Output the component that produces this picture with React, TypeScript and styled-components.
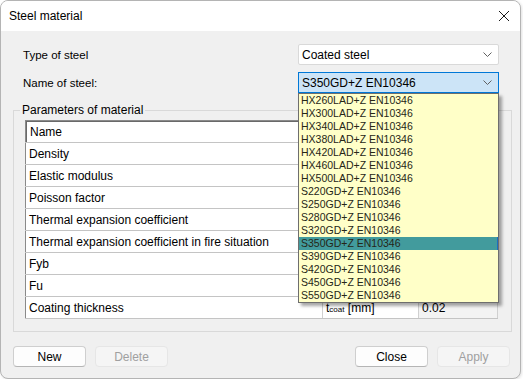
import React from 'react';
import styled, { createGlobalStyle } from 'styled-components';

const GlobalStyle = createGlobalStyle`
  html, body {
    margin: 0;
    padding: 0;
    background: #ffffff;
  }
  body {
    font-family: 'Liberation Sans', Arial, sans-serif;
    font-size: 12px;
    color: #000;
  }
`;

const steelNames = [
  'HX260LAD+Z EN10346',
  'HX300LAD+Z EN10346',
  'HX340LAD+Z EN10346',
  'HX380LAD+Z EN10346',
  'HX420LAD+Z EN10346',
  'HX460LAD+Z EN10346',
  'HX500LAD+Z EN10346',
  'S220GD+Z EN10346',
  'S250GD+Z EN10346',
  'S280GD+Z EN10346',
  'S320GD+Z EN10346',
  'S350GD+Z EN10346',
  'S390GD+Z EN10346',
  'S420GD+Z EN10346',
  'S450GD+Z EN10346',
  'S550GD+Z EN10346',
];

// name, symbol, subscript, unit, value
const params: [string, string, string, string, string][] = [
  ['Density', 'ρ', '', '[kg/m³]', '7850'],
  ['Elastic modulus', 'E', '', '[MPa]', '210000'],
  ['Poisson factor', 'ν', '', '[-]', '0.3'],
  ['Thermal expansion coefficient', 'α', '', '[1/K]', '1.2E-05'],
  ['Thermal expansion coefficient in fire situation', 'α', 'fi', '[1/K]', '1.4E-05'],
  ['Fyb', 'f', 'yb', '[MPa]', '350'],
  ['Fu', 'f', 'u', '[MPa]', '420'],
  ['Coating thickness', 't', 'coat', '[mm]', '0.02'],
];

const Window = styled.div`
  width: 519px;
  height: 377px;
  border: 1px solid #b4b4b4;
  border-radius: 8px;
  overflow: hidden;
  display: flex;
  flex-direction: column;
  background: #f0f0f0;
  box-shadow: 1px 1px 3px rgba(0, 0, 0, 0.12);
`;

const TitleBar = styled.div`
  height: 30px;
  background: #ffffff;
  display: flex;
  align-items: center;
  justify-content: space-between;
  padding: 0 9px 0 8px;
  font-size: 12px;
  color: #000;
`;

const CloseIcon = styled.svg`
  width: 12px;
  height: 12px;
  margin-right: 1px;
`;

const Body = styled.div`
  flex: 1;
  display: flex;
  flex-direction: column;
  padding: 13px 8px 10px 12px;
`;

const FormRow = styled.div`
  display: grid;
  grid-template-columns: 1fr 201px;
  align-items: center;
  padding: 0 13px 0 10px;
  margin-bottom: 7px;
`;

const Label = styled.span`
  font-size: 11.5px;
  color: #000;
`;

const ComboWrap = styled.div`
  position: relative;
`;

const Combo = styled.div<{ $focused?: boolean }>`
  height: 19px;
  box-sizing: content-box;
  border: 1px solid ${p => (p.$focused ? '#0078d7' : '#d9d9d9')};
  border-radius: ${p => (p.$focused ? '0' : '2px')};
  background: ${p => (p.$focused ? '#cce4f7' : '#ffffff')};
  display: flex;
  align-items: center;
  justify-content: space-between;
  padding: 0 6px 0 3px;
  font-size: 12px;
`;

const Chevron = styled.svg`
  width: 9px;
  height: 5px;
`;

const DropList = styled.div`
  position: absolute;
  top: 100%;
  left: 0;
  width: 199px;
  border: 1px solid #6e6e6e;
  background: #ffffc8;
  box-shadow: 3px 3px 3px rgba(0, 0, 0, 0.35);
  z-index: 10;
`;

const DropItem = styled.div<{ $selected?: boolean }>`
  height: 13px;
  line-height: 13px;
  padding-left: 2px;
  font-size: 10.5px;
  color: #262617;
  background: ${p => (p.$selected ? '#429b9d' : 'transparent')};
  border-right: 1px solid ${p => (p.$selected ? '#1c6fc0' : 'transparent')};
`;

const Group = styled.fieldset`
  margin: 3px 0 0 0;
  padding: 3px 12px 12px 11px;
  border: 1px solid #d9d9d9;
  min-width: 0;
`;

const Legend = styled.legend`
  padding: 0 2px;
  margin-left: -5px;
  font-size: 12px;
  line-height: 14px;
`;

const Table = styled.table`
  width: 473px;
  border-collapse: collapse;
  table-layout: fixed;
  background: #ffffff;
  border-top: 1px solid #8a8a8a;
  border-left: 1px solid #8a8a8a;
  border-right: 1px solid #c8c8c8;
  border-bottom: 1px solid #c8c8c8;
  box-shadow: inset 1px 1px 0 #696969;
`;

const HeadCell = styled.th`
  height: 21px;
  text-align: left;
  font-weight: normal;
  padding: 0 4px;
  border-bottom: 1px solid #c4c4c4;
  font-size: 12px;
`;

const Cell = styled.td<{ $shaded?: boolean }>`
  height: 21px;
  padding: 0 3px;
  border-bottom: 1px solid #c4c4c4;
  border-right: 1px solid #d0d0d0;
  background: ${p => (p.$shaded ? '#f3f3f3' : '#ffffff')};
  font-size: 12px;
  white-space: nowrap;
  overflow: hidden;
`;

const Sub = styled.span`
  font-size: 8px;
`;

const ButtonRow = styled.div`
  display: flex;
  align-items: center;
  margin-top: 14px;
  padding-right: 2px;
  gap: 9px;
`;

const Spacer = styled.div`
  flex: 1;
`;

const Button = styled.button`
  width: 73px;
  height: 21px;
  box-sizing: border-box;
  border: 1px solid #cfcfcf;
  border-bottom-color: #b5b5b5;
  border-radius: 4px;
  background: #fdfdfd;
  font-family: 'Liberation Sans', Arial, sans-serif;
  font-size: 12px;
  font-weight: 400;
  color: #000;
  padding: 0;

  &:disabled {
    background: #f5f5f5;
    border-color: #e6e6e6;
    color: #a0a0a0;
  }
`;

export default function App() {
  return (
    <>
      <GlobalStyle />
      <Window>
        <TitleBar>
          <span>Steel material</span>
          <CloseIcon viewBox="0 0 12 12">
            <path d="M1 1 L11 11 M11 1 L1 11" stroke="#1a1a1a" strokeWidth="1" fill="none" />
          </CloseIcon>
        </TitleBar>
        <Body>
          <FormRow>
            <Label>Type of steel</Label>
            <ComboWrap>
              <Combo>
                <span>Coated steel</span>
                <Chevron viewBox="0 0 9 5">
                  <path d="M0.5 0.5 L4.5 4.5 L8.5 0.5" stroke="#606060" strokeWidth="1" fill="none" />
                </Chevron>
              </Combo>
            </ComboWrap>
          </FormRow>
          <FormRow>
            <Label>Name of steel:</Label>
            <ComboWrap>
              <Combo $focused>
                <span>S350GD+Z EN10346</span>
                <Chevron viewBox="0 0 9 5">
                  <path d="M0.5 0.5 L4.5 4.5 L8.5 0.5" stroke="#606060" strokeWidth="1" fill="none" />
                </Chevron>
              </Combo>
              <DropList>
                {steelNames.map(n => (
                  <DropItem key={n} $selected={n === 'S350GD+Z EN10346'}>
                    {n}
                  </DropItem>
                ))}
              </DropList>
            </ComboWrap>
          </FormRow>
          <Group>
            <Legend>Parameters of material</Legend>
            <Table>
              <colgroup>
                <col style={{ width: 297 }} />
                <col style={{ width: 96 }} />
                <col />
              </colgroup>
              <thead>
                <tr>
                  <HeadCell>Name</HeadCell>
                  <HeadCell>Symbol</HeadCell>
                  <HeadCell>Value</HeadCell>
                </tr>
              </thead>
              <tbody>
                {params.map(([name, sym, sub, unit, value]) => (
                  <tr key={name}>
                    <Cell>{name}</Cell>
                    <Cell>
                      {sym}
                      {sub && <Sub>{sub}</Sub>} {unit}
                    </Cell>
                    <Cell $shaded>{value}</Cell>
                  </tr>
                ))}
              </tbody>
            </Table>
          </Group>
          <ButtonRow>
            <Button>New</Button>
            <Button disabled>Delete</Button>
            <Spacer />
            <Button>Close</Button>
            <Button disabled>Apply</Button>
          </ButtonRow>
        </Body>
      </Window>
    </>
  );
}
